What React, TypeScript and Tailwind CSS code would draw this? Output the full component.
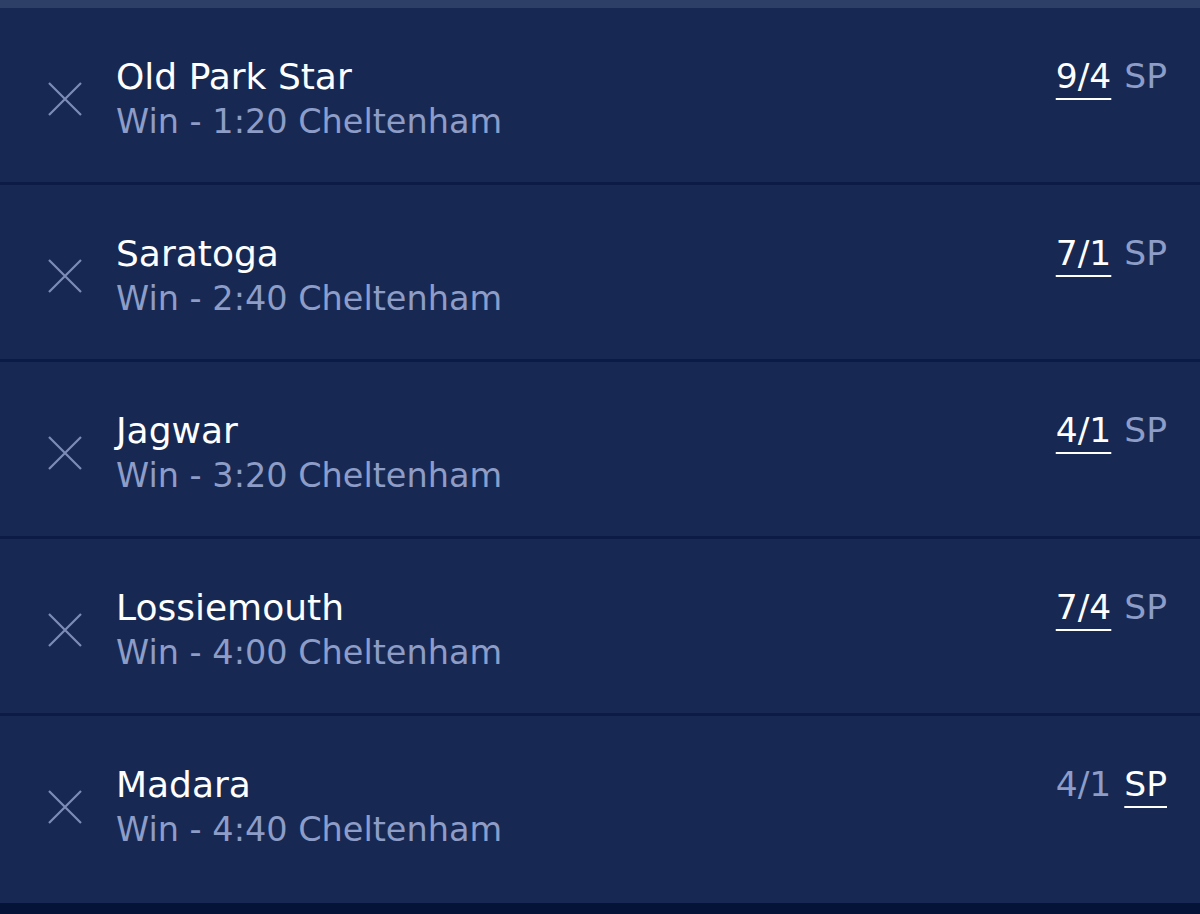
import React from "react";

type Bet = { name: string; time: string; odds: string; spSelected?: boolean };

const bets: Bet[] = [
  { name: "Old Park Star", time: "1:20", odds: "9/4" },
  { name: "Saratoga", time: "2:40", odds: "7/1" },
  { name: "Jagwar", time: "3:20", odds: "4/1" },
  { name: "Lossiemouth", time: "4:00", odds: "7/4" },
  { name: "Madara", time: "4:40", odds: "4/1", spSelected: true },
];

function CloseIcon() {
  return (
    <svg width="34" height="34" viewBox="0 0 34 34" fill="none">
      <path d="M1 1L33 33M33 1L1 33" stroke="#7d8cb6" strokeWidth="2.2" />
    </svg>
  );
}

function Row({ bet, last }: { bet: Bet; last: boolean }) {
  return (
    <div
      className={`flex items-start bg-[#172953] ${last ? "h-[187px]" : "h-[174px] border-b-[3px] border-[#0c1b45]"} box-content`}
    >
      <div className="w-[116px] shrink-0 flex justify-start pt-[74px] pl-[48px]">
        <CloseIcon />
      </div>
      <div className="flex-1 pt-[46px]">
        <div className="text-[36px] leading-[45px] text-white">{bet.name}</div>
        <div className="text-[33.5px] leading-[45px] text-[#8d9dc7]">
          Win - {bet.time} Cheltenham
        </div>
      </div>
      <div className="pt-[46px] pr-[33px] text-[34.5px] leading-[45px] flex gap-[13px]">
        {bet.spSelected ? (
          <>
            <span className="text-[#8d9dc7]">{bet.odds}</span>
            <span className="text-white underline decoration-2 underline-offset-[10px]">SP</span>
          </>
        ) : (
          <>
            <span className="text-white underline decoration-2 underline-offset-[10px]">{bet.odds}</span>
            <span className="text-[#8d9dc7]">SP</span>
          </>
        )}
      </div>
    </div>
  );
}

export default function App() {
  return (
    <div
      className="w-[1200px] h-[914px] overflow-hidden bg-[#061338] flex flex-col"
      style={{ fontFamily: '"DejaVu Sans", Verdana, sans-serif' }}
    >
      <div className="h-[8px] bg-[#2e3f67] shrink-0" />
      {bets.map((b, i) => (
        <Row key={b.name} bet={b} last={i === bets.length - 1} />
      ))}
    </div>
  );
}
